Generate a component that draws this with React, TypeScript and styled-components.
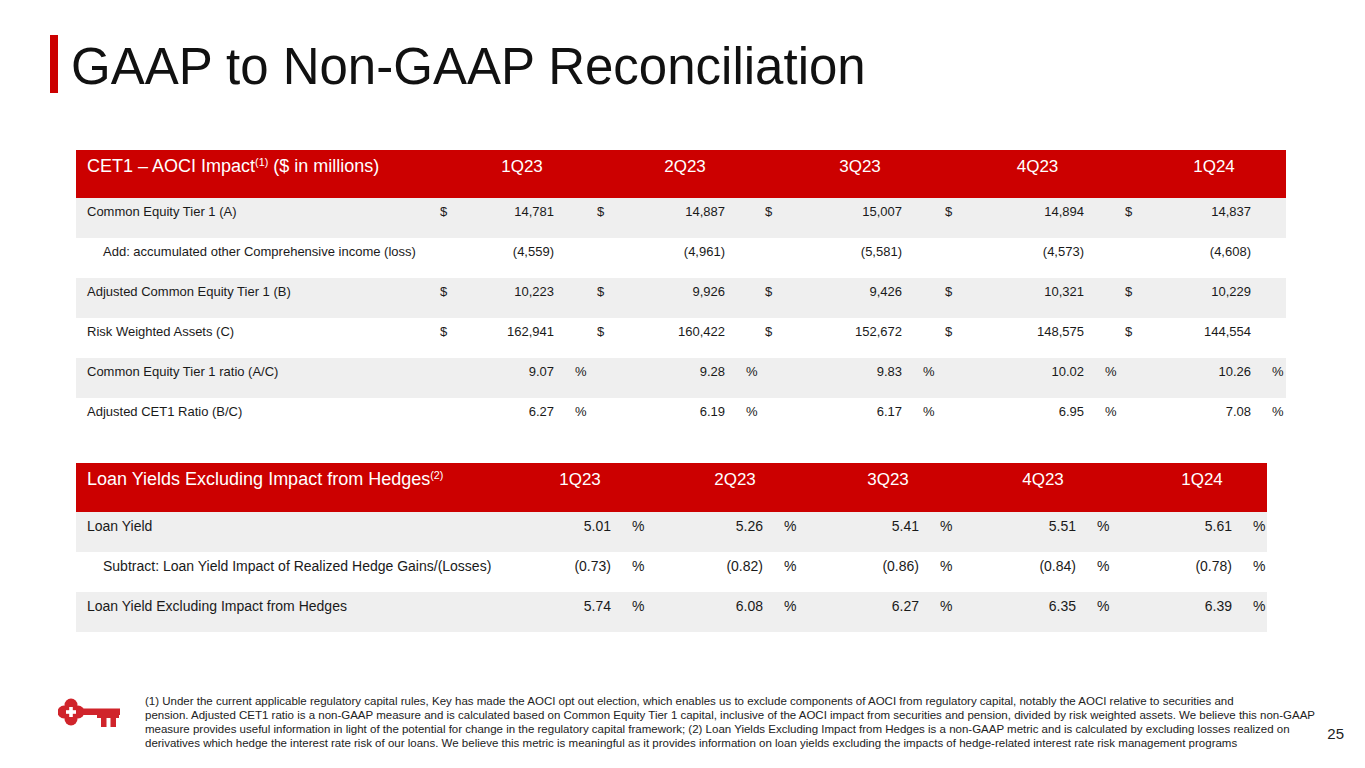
import React from "react";
import styled, { createGlobalStyle } from "styled-components";

const GlobalStyle = createGlobalStyle`
  html, body {
    margin: 0;
    padding: 0;
    background: #fff;
  }
  body {
    font-family: "Liberation Sans", Arial, sans-serif;
    color: #1a1a1a;
  }
`;

const RED = "#cc0000";
const SHADE = "#efefef";

const px = (cols: number[]) => cols.map((c) => `${c}px`).join(" ");

const Page = styled.div`
  width: 1365px;
  height: 768px;
  padding-top: 35px;
  box-sizing: border-box;
  display: flex;
  flex-direction: column;
  overflow: hidden;
`;

const TitleRow = styled.div`
  display: flex;
  align-items: center;
  gap: 13px;
  margin-left: 50px;
  height: 58px;
`;

const TitleBar = styled.div`
  width: 8px;
  height: 58px;
  background: ${RED};
`;

const Title = styled.h1`
  margin: 0;
  padding-top: 6px;
  font-size: 51px;
  line-height: 58px;
  font-weight: normal;
  color: #111;
  white-space: nowrap;
`;

const Table = styled.div<{ $width: number; $top: number }>`
  width: ${({ $width }) => $width}px;
  margin-left: 76px;
  margin-top: ${({ $top }) => $top}px;
  display: flex;
  flex-direction: column;
`;

const HeadRow = styled.div<{ $cols: string; $height: number }>`
  display: grid;
  grid-template-columns: ${({ $cols }) => $cols};
  height: ${({ $height }) => $height}px;
  box-sizing: border-box;
  padding-top: 6px;
  background: ${RED};
  color: #fff;
`;

const HeadTitle = styled.div`
  padding-left: 11px;
  font-size: 18px;
  line-height: 21px;
  white-space: nowrap;
`;

const HeadQuarter = styled.div`
  text-align: center;
  font-size: 17px;
  line-height: 21px;
`;

const Sup = styled.sup`
  font-size: 0.6em;
  vertical-align: baseline;
  position: relative;
  top: -0.55em;
`;

const Row = styled.div<{ $cols: string; $shade: boolean; $size: number }>`
  display: grid;
  grid-template-columns: ${({ $cols }) => $cols};
  height: 40px;
  box-sizing: border-box;
  padding-top: 6px;
  background: ${({ $shade }) => ($shade ? SHADE : "#fff")};
  font-size: ${({ $size }) => $size}px;
  line-height: 16px;
  color: #1a1a1a;
`;

const Label = styled.div<{ $indent?: boolean }>`
  padding-left: ${({ $indent }) => ($indent ? 27 : 11)}px;
  white-space: nowrap;
`;

const Sign = styled.div`
  padding-left: 10px;
`;

const Value = styled.div`
  text-align: right;
  white-space: nowrap;
`;

const Pct = styled.div<{ $gap: number }>`
  padding-left: ${({ $gap }) => $gap}px;
  white-space: nowrap;
`;

const Footer = styled.div`
  display: flex;
  align-items: flex-start;
  margin-top: 62px;
`;

const LogoWrap = styled.div`
  margin-left: 58px;
  margin-top: 3px;
  width: 62px;
  height: 31px;
  flex: none;
`;

const Notes = styled.div`
  margin-left: 25px;
  font-size: 11.5px;
  line-height: 14px;
  color: #222;
`;

const NoteLine = styled.div`
  white-space: nowrap;
`;

const PageNum = styled.div`
  margin-left: auto;
  margin-right: 21px;
  margin-top: 31px;
  font-size: 15px;
  line-height: 18px;
  color: #222;
`;

type Kind = "dollar" | "plain" | "pct";

interface DataRow {
  label: string;
  kind: Kind;
  indent?: boolean;
  values: string[];
}

const quarters = ["1Q23", "2Q23", "3Q23", "4Q23", "1Q24"];

const cetRows: DataRow[] = [
  { label: "Common Equity Tier 1 (A)", kind: "dollar", values: ["14,781", "14,887", "15,007", "14,894", "14,837"] },
  { label: "Add: accumulated other Comprehensive income (loss)", kind: "plain", indent: true, values: ["(4,559)", "(4,961)", "(5,581)", "(4,573)", "(4,608)"] },
  { label: "Adjusted Common Equity Tier 1 (B)", kind: "dollar", values: ["10,223", "9,926", "9,426", "10,321", "10,229"] },
  { label: "Risk Weighted Assets (C)", kind: "dollar", values: ["162,941", "160,422", "152,672", "148,575", "144,554"] },
  { label: "Common Equity Tier 1 ratio (A/C)", kind: "pct", values: ["9.07", "9.28", "9.83", "10.02", "10.26"] },
  { label: "Adjusted CET1 Ratio (B/C)", kind: "pct", values: ["6.27", "6.19", "6.17", "6.95", "7.08"] },
];

const yieldRows: DataRow[] = [
  { label: "Loan Yield", kind: "pct", values: ["5.01", "5.26", "5.41", "5.51", "5.61"] },
  { label: "Subtract: Loan Yield Impact of Realized Hedge Gains/(Losses)", kind: "pct", indent: true, values: ["(0.73)", "(0.82)", "(0.86)", "(0.84)", "(0.78)"] },
  { label: "Loan Yield Excluding Impact from Hedges", kind: "pct", values: ["5.74", "6.08", "6.27", "6.35", "6.39"] },
];

interface TableProps {
  title: React.ReactNode;
  rows: DataRow[];
  cols: number[];
  headCols: number[];
  headHeight: number;
  withSign: boolean;
  size: number;
  pctGap: number;
  top: number;
}

const DataTable: React.FC<TableProps> = ({
  title,
  rows,
  cols,
  headCols,
  headHeight,
  withSign,
  size,
  pctGap,
  top,
}) => {
  const width = cols.reduce((a, b) => a + b, 0);
  return (
    <Table $width={width} $top={top}>
      <HeadRow $cols={px(headCols)} $height={headHeight}>
        <HeadTitle>{title}</HeadTitle>
        {quarters.map((q) => (
          <HeadQuarter key={q}>{q}</HeadQuarter>
        ))}
      </HeadRow>
      {rows.map((row, i) => (
        <Row key={row.label} $cols={px(cols)} $shade={i % 2 === 0} $size={size}>
          <Label $indent={row.indent}>{row.label}</Label>
          {row.values.map((v, j) => (
            <React.Fragment key={j}>
              {withSign && <Sign>{row.kind === "dollar" ? "$" : ""}</Sign>}
              <Value>{v}</Value>
              <Pct $gap={pctGap}>{row.kind === "pct" ? "%" : ""}</Pct>
            </React.Fragment>
          ))}
        </Row>
      ))}
    </Table>
  );
};

const KeyLogo = () => (
  <svg width="62" height="31" viewBox="0 0 62 31">
    <g fill="#d0242b">
      <circle cx="13" cy="8" r="6.5" />
      <circle cx="13" cy="22" r="6.5" />
      <circle cx="6" cy="15" r="6.5" />
      <circle cx="20" cy="15" r="6.5" />
      <rect x="7" y="9" width="12" height="12" />
      <rect x="24" y="11.5" width="38" height="6.5" />
      <path d="M39 18 H61 V21 H58 V30 H52.5 V21 H48.5 V30 H43 V21 H39 Z" />
    </g>
    <g fill="#fff">
      <rect x="11.2" y="10" width="3.6" height="10" />
      <rect x="8" y="13.2" width="10" height="3.6" />
    </g>
  </svg>
);

const App: React.FC = () => (
  <>
    <GlobalStyle />
    <Page>
      <TitleRow>
        <TitleBar />
        <Title>GAAP to Non-GAAP Reconciliation</Title>
      </TitleRow>

      <DataTable
        title={
          <>
            CET1 – AOCI Impact<Sup>(1)</Sup> ($ in millions)
          </>
        }
        rows={cetRows}
        cols={[354, 40, 84, 33, 40, 98, 30, 40, 107, 33, 40, 109, 31, 40, 96, 35]}
        headCols={[385, 122, 204, 146, 209, 144]}
        headHeight={48}
        withSign
        size={13}
        pctGap={21}
        top={57}
      />

      <DataTable
        title={
          <>
            Loan Yields Excluding Impact from Hedges<Sup>(2)</Sup>
          </>
        }
        rows={yieldRows}
        cols={[464, 71, 79, 73, 82, 74, 81, 76, 84, 72, 35]}
        headCols={[441, 126, 184, 122, 188, 130]}
        headHeight={49}
        withSign={false}
        size={14}
        pctGap={21}
        top={25}
      />

      <Footer>
        <LogoWrap>
          <KeyLogo />
        </LogoWrap>
        <Notes>
          <NoteLine>
            (1) Under the current applicable regulatory capital rules, Key has made the AOCI opt out election, which enables us to exclude components of AOCI from regulatory capital, notably the AOCI relative to securities and
          </NoteLine>
          <NoteLine>
            pension. Adjusted CET1 ratio is a non-GAAP measure and is calculated based on Common Equity Tier 1 capital, inclusive of the AOCI impact from securities and pension, divided by risk weighted assets. We believe this non-GAAP
          </NoteLine>
          <NoteLine>
            measure provides useful information in light of the potential for change in the regulatory capital framework; (2) Loan Yields Excluding Impact from Hedges is a non-GAAP metric and is calculated by excluding losses realized on
          </NoteLine>
          <NoteLine>
            derivatives which hedge the interest rate risk of our loans. We believe this metric is meaningful as it provides information on loan yields excluding the impacts of hedge-related interest rate risk management programs
          </NoteLine>
        </Notes>
        <PageNum>25</PageNum>
      </Footer>
    </Page>
  </>
);

export default App;
